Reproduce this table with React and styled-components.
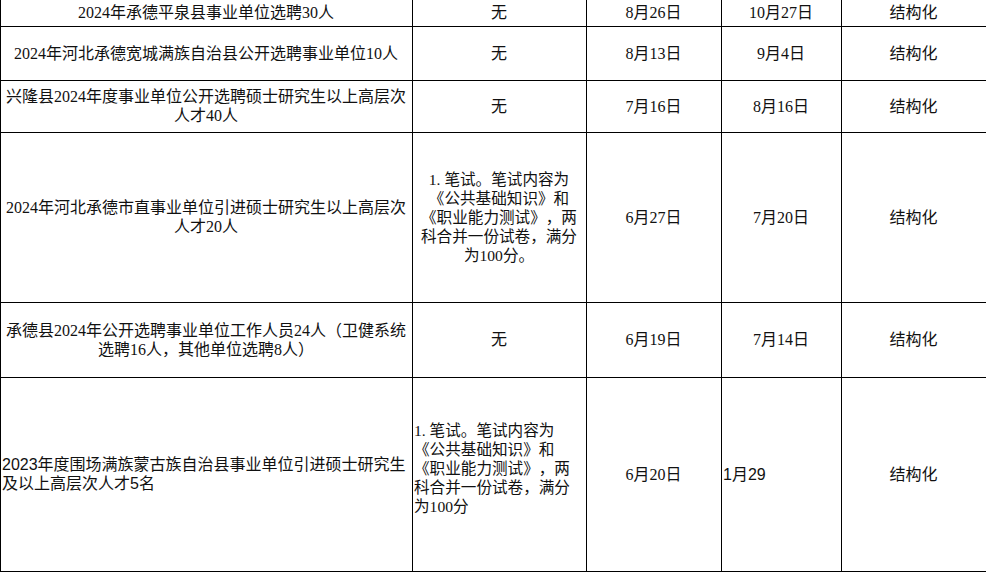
import { Fragment } from "react";
import styled, { createGlobalStyle } from "styled-components";

const GlobalStyle = createGlobalStyle`
  html, body {
    margin: 0;
    padding: 0;
    background: #fff;
  }
  body {
    font-family: "Liberation Serif", "Noto Sans CJK SC", serif;
    color: #000;
  }
`;

const serif = `"Liberation Serif", "Noto Sans CJK SC", serif`;
const sans = `"Liberation Sans", "Noto Sans CJK SC", sans-serif`;

const widths = [412, 174, 135, 120, 145];

const exam =
  "1. 笔试。笔试内容为《公共基础知识》和《职业能力测试》，两科合并一份试卷，满分为100分";

const rows = [
  {
    h: 26,
    title: ["2024年承德平泉县事业单位选聘30人"],
    exam: "无",
    start: "8月26日",
    end: "10月27日",
  },
  {
    h: 54,
    title: ["2024年河北承德宽城满族自治县公开选聘事业单位10人"],
    exam: "无",
    start: "8月13日",
    end: "9月4日",
  },
  {
    h: 52,
    title: ["兴隆县2024年度事业单位公开选聘硕士研究生以上高层次", "人才40人"],
    exam: "无",
    start: "7月16日",
    end: "8月16日",
  },
  {
    h: 170,
    title: ["2024年河北承德市直事业单位引进硕士研究生以上高层次", "人才20人"],
    exam: exam + "。",
    examSize: 15.6,
    start: "6月27日",
    end: "7月20日",
  },
  {
    h: 75,
    title: ["承德县2024年公开选聘事业单位工作人员24人（卫健系统", "选聘16人，其他单位选聘8人）"],
    exam: "无",
    start: "6月19日",
    end: "7月14日",
  },
  {
    h: 194,
    title: ["2023年度围场满族蒙古族自治县事业单位引进硕士研究生", "及以上高层次人才5名"],
    titleAlign: "left",
    titleSans: true,
    exam: exam,
    examSize: 15.6,
    examAlign: "left",
    examLift: 12,
    start: "6月20日",
    end: "1月29",
    endAlign: "left",
    endSans: true,
  },
];

export default function App() {
  return (
    <>
      <GlobalStyle />
      <Table>
        <colgroup>
          {widths.map((w, i) => (
            <Col key={i} $w={w} />
          ))}
        </colgroup>
        <tbody>
          {rows.map((r, i) => (
            <Row key={i} $h={r.h}>
              <Cell $align={r.titleAlign} $sans={r.titleSans} $nowrap>
                {r.title.map((line, j) => (
                  <Fragment key={j}>
                    {j > 0 && <br />}
                    {line}
                  </Fragment>
                ))}
              </Cell>
              <Cell $size={r.examSize} $align={r.examAlign} $lift={r.examLift}>
                {r.exam}
              </Cell>
              <Cell>{r.start}</Cell>
              <Cell $align={r.endAlign} $sans={r.endSans}>
                {r.end}
              </Cell>
              <Cell>结构化</Cell>
            </Row>
          ))}
        </tbody>
      </Table>
    </>
  );
}

const Table = styled.table`
  width: 986px;
  border-collapse: collapse;
  table-layout: fixed;

  tr:first-child td {
    border-top: none;
  }
`;

const Col = styled.col`
  width: ${(p) => p.$w}px;
`;

const Row = styled.tr`
  height: ${(p) => p.$h}px;
`;

const Cell = styled.td`
  border: 1px solid #000;
  padding: 0 2px ${(p) => p.$lift || 0}px 1px;
  vertical-align: middle;
  text-align: ${(p) => p.$align || "center"};
  font-family: ${(p) => (p.$sans ? sans : serif)};
  font-size: ${(p) => p.$size || 16}px;
  line-height: 19px;
  color: #111;
  white-space: ${(p) => (p.$nowrap ? "nowrap" : "normal")};
  overflow: hidden;
  line-break: strict;
  text-spacing-trim: space-all;
`;
